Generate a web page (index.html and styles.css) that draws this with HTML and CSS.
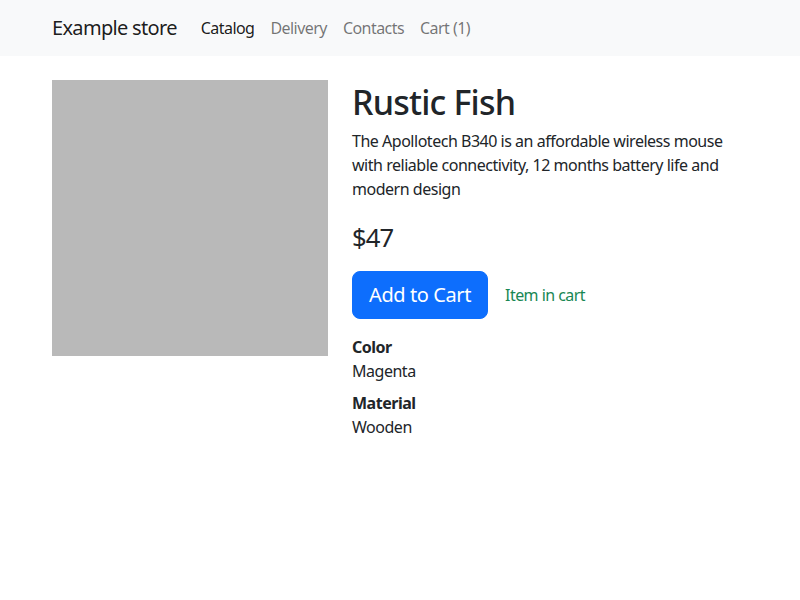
FILE: index.html
```html
<!DOCTYPE html>
<html lang="en">
<head>
<meta charset="utf-8">
<title>Example store</title>
<link rel="stylesheet" href="styles.css">
</head>
<body>
<nav class="navbar">
  <div class="container nav-inner">
    <a class="brand" href="#">Example store</a>
    <ul class="nav">
      <li><a class="nav-link active" href="#">Catalog</a></li>
      <li><a class="nav-link" href="#">Delivery</a></li>
      <li><a class="nav-link" href="#">Contacts</a></li>
      <li><a class="nav-link" href="#">Cart (1)</a></li>
    </ul>
  </div>
</nav>
<main class="container product">
  <div class="col-image">
    <div class="image"></div>
  </div>
  <div class="col-info">
    <h1 class="title">Rustic Fish</h1>
    <p class="desc">The Apollotech B340 is an affordable wireless mouse with reliable connectivity, 12 months battery life and modern design</p>
    <p class="price">$47</p>
    <div class="actions">
      <button class="btn-cart" type="button">Add to Cart</button>
      <span class="in-cart">Item in cart</span>
    </div>
    <dl class="props">
      <dt>Color</dt>
      <dd>Magenta</dd>
      <dt>Material</dt>
      <dd>Wooden</dd>
    </dl>
  </div>
</main>
</body>
</html>
```
FILE: styles.css
```css
* { box-sizing: border-box; }
body {
  margin: 0;
  font-family: "Noto Sans", "Open Sans", sans-serif;
  font-size: 16px;
  line-height: 1.5;
  color: #212529;
  background: #fff;
  letter-spacing: -0.48px;
}
.container {
  width: 720px;
  margin: 0 auto;
  padding: 0 12px;
}
.navbar {
  background: #f8f9fa;
  padding: 8px 0;
}
.nav-inner {
  display: flex;
  align-items: center;
}
.brand {
  font-size: 20px;
  letter-spacing: -0.68px;
  padding: 5px 0;
  margin-right: 16px;
  color: rgba(0,0,0,.9);
  text-decoration: none;
  line-height: 30px;
}
.nav {
  display: flex;
  list-style: none;
  margin: 0;
  padding: 0;
}
.nav-link {
  display: block;
  padding: 8px;
  color: rgba(0,0,0,.55);
  text-decoration: none;
  letter-spacing: -0.55px;
}
.nav-link.active { color: rgba(0,0,0,.9); }
.product {
  display: flex;
  margin-top: 24px;
}
.col-image {
  width: 300px;
  padding-right: 24px;
}
.image {
  width: 276px;
  height: 276px;
  background: #b9b9b9;
}
.col-info {
  flex: 1;
}
.title {
  font-size: 34px;
  font-weight: 500;
  line-height: 1.2;
  letter-spacing: -0.8px;
  margin: 2px 0 6px;
}
.desc { margin: 0 0 16px; }
.price {
  font-size: 25.6px;
  letter-spacing: -0.9px;
  margin: 0 0 16px;
  line-height: 1.5;
  padding-top: 2px;
  height: 38px;
  box-sizing: border-box;
}
.actions {
  display: flex;
  align-items: center;
  margin-bottom: 16px;
}
.btn-cart {
  font-family: inherit;
  font-size: 20px;
  letter-spacing: -0.4px;
  line-height: 1.5;
  padding: 8px 16px;
  border: 1px solid #0d6efd;
  border-radius: 8px;
  background: #0d6efd;
  color: #fff;
}
.in-cart {
  margin-left: 17px;
  color: #198754;
  letter-spacing: -0.55px;
}
.props { margin: 0; }
.props dt { font-weight: 700; }
.props dd { margin: 0 0 8px; }
```
